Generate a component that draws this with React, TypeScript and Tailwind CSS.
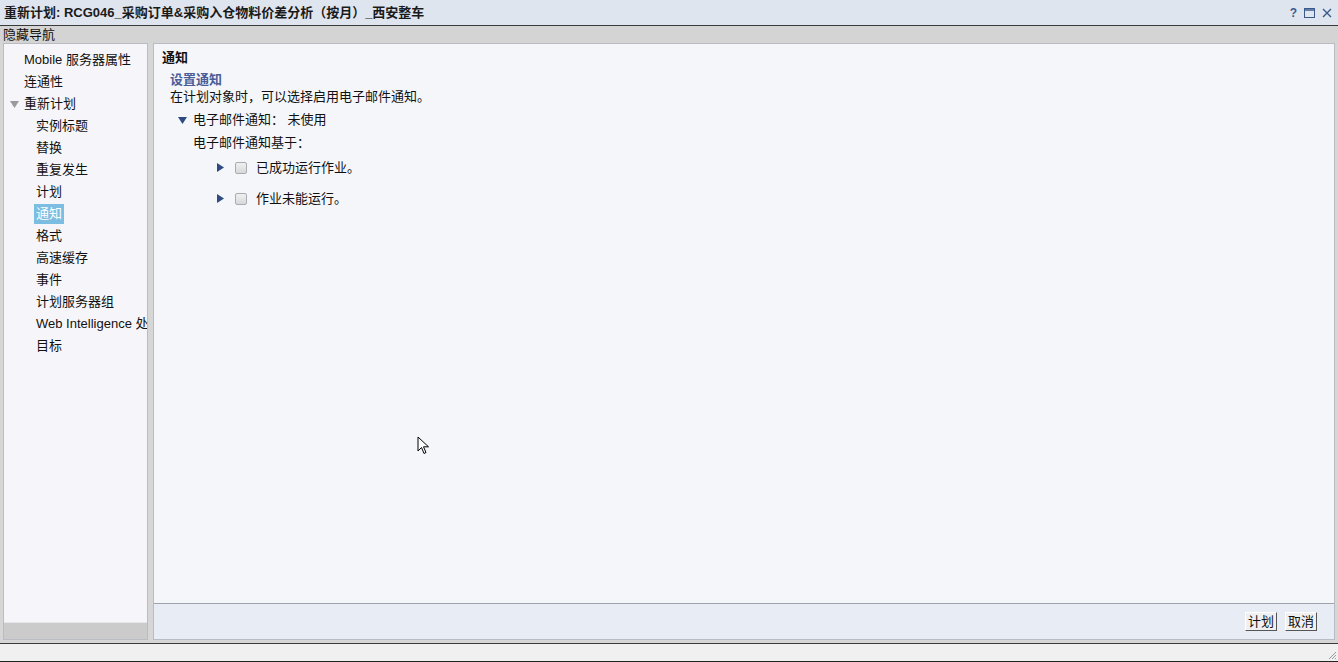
import { useState } from 'react';

const font = '"Liberation Sans", "Noto Sans CJK SC", sans-serif';

const navItems = [
  { label: '实例标题' },
  { label: '替换' },
  { label: '重复发生' },
  { label: '计划' },
  { label: '通知', active: true },
  { label: '格式' },
  { label: '高速缓存' },
  { label: '事件' },
  { label: '计划服务器组' },
  { label: 'Web Intelligence 处理' },
  { label: '目标' },
];

function Tri({ dir, color = '#2f4a80' }: { dir: 'down' | 'right'; color?: string }) {
  return dir === 'down' ? (
    <svg width="9" height="7" viewBox="0 0 9 7" className="shrink-0">
      <path d="M0 0 L9 0 L4.5 7 Z" fill={color} />
    </svg>
  ) : (
    <svg width="7" height="9" viewBox="0 0 7 9" className="shrink-0">
      <path d="M0 0 L7 4.5 L0 9 Z" fill={color} />
    </svg>
  );
}

function CheckRow({ label }: { label: string }) {
  const [on, setOn] = useState(false);
  return (
    <div className="flex items-center h-[31px] pl-[55px]">
      <Tri dir="right" />
      <button
        onClick={() => setOn(!on)}
        className="ml-[11px] w-[12px] h-[12px] border border-[#a9acb3] rounded-[2px] bg-gradient-to-b from-[#f0f0f0] to-[#d8d8d8]"
      />
      <span className="ml-[9px] text-[13px] text-[#111]">{label}</span>
    </div>
  );
}

export default function App() {
  return (
    <div className="w-[1338px] h-[662px] bg-[#d6d6d6] flex flex-col overflow-hidden relative" style={{ fontFamily: font }}>
      {/* Title bar */}
      <div className="h-[26px] bg-[#dfe5ef] border-b border-[#3a3a3a] flex items-center justify-between px-[4px] shrink-0">
        <span className="text-[13px] font-bold text-[#1a1a1a]">重新计划: RCG046_采购订单&amp;采购入仓物料价差分析（按月）_西安整车</span>
        <div className="flex items-center gap-[7px] pr-[2px] text-[#3b5a8c]">
          <span className="text-[12px] font-bold">?</span>
          <svg width="11" height="10" viewBox="0 0 11 10">
            <rect x="0.5" y="0.5" width="10" height="9" fill="none" stroke="#3b5a8c" />
            <line x1="0" y1="2" x2="11" y2="2" stroke="#3b5a8c" strokeWidth="1.5" />
          </svg>
          <svg width="10" height="10" viewBox="0 0 10 10">
            <path d="M1 1 L9 9 M9 1 L1 9" stroke="#3b5a8c" strokeWidth="1.4" />
          </svg>
        </div>
      </div>

      {/* Hide nav */}
      <div className="h-[17px] bg-[#d4d4d4] flex items-center px-[3px] text-[13px] text-[#111] shrink-0">隐藏导航</div>

      {/* Body */}
      <div className="flex flex-1 px-[3px] gap-[5px] pb-[3px]">
        {/* Left nav */}
        <div className="w-[145px] border border-[#b9bcc2] bg-[#f6f6fa] flex flex-col overflow-hidden">
          <div className="flex-1 pt-[5px] text-[13px] text-[#111] whitespace-nowrap">
            <div className="h-[22px] flex items-center pl-[20px]">Mobile 服务器属性</div>
            <div className="h-[22px] flex items-center pl-[20px]">连通性</div>
            <div className="h-[22px] flex items-center pl-[6px] gap-[5px]">
              <Tri dir="down" color="#9a9a9a" />
              <span>重新计划</span>
            </div>
            {navItems.map((it) => (
              <div key={it.label} className="h-[22px] flex items-center pl-[30px]">
                <span className={it.active ? 'bg-[#7cbde2] text-white px-[2px]' : 'px-[2px]'}>{it.label}</span>
              </div>
            ))}
          </div>
          <div className="h-[17px] bg-[#cbcbcb] border-t border-[#e6e6ea]" />
        </div>

        {/* Right content */}
        <div className="flex-1 border border-[#b9bcc2] bg-[#f5f6fa] flex flex-col">
          <div className="flex-1 pl-[8px] pt-[4px]">
            <div className="text-[13px] font-bold text-[#111] h-[17px]">通知</div>
            <div className="pl-[8px] mt-[6px]">
              <div className="text-[13px] font-bold text-[#4a5d98] leading-[17px]">设置通知</div>
              <div className="text-[13px] text-[#111] leading-[17px]">在计划对象时，可以选择启用电子邮件通知。</div>
            </div>
            <div className="mt-[5px]">
              <div className="flex items-center h-[20px] pl-[16px] gap-[6px] text-[13px] text-[#111]">
                <Tri dir="down" />
                <span>电子邮件通知：&nbsp;未使用</span>
              </div>
              <div className="h-[22px] pt-[5px] leading-[16px] pl-[31px] text-[13px] text-[#111]">电子邮件通知基于：</div>
              <CheckRow label="已成功运行作业。" />
              <CheckRow label="作业未能运行。" />
            </div>
          </div>
          <div className="h-[36px] bg-[#e8ecf4] border-t border-[#9ea3ad] flex items-center justify-end gap-[8px] pr-[17px]">
            <button className="h-[19px] px-[2px] bg-[#f0f0f0] border-r border-b border-[#555] border-l border-t border-l-white border-t-white text-[13px] text-[#111] leading-none">计划</button>
            <button className="h-[19px] px-[2px] bg-[#f0f0f0] border-r border-b border-[#555] border-l border-t border-l-white border-t-white text-[13px] text-[#111] leading-none">取消</button>
          </div>
        </div>
      </div>

      {/* Status bar */}
      <div className="h-[19px] bg-[#f0f0f0] border-t border-[#3a3a3a] border-b border-b-[#222] flex justify-end items-end shrink-0">
        <svg width="10" height="10" viewBox="0 0 10 10" className="mb-[1px] mr-[1px]">
          <path d="M9 2 L2 9 M9 5 L5 9 M9 8 L8 9" stroke="#999" />
        </svg>
      </div>

      {/* mouse cursor */}
      <svg width="14" height="20" viewBox="0 0 14 20" className="absolute left-[417px] top-[436px]">
        <path d="M1 1 L1 15 L4.5 11.5 L7 17.5 L9 16.5 L6.5 10.8 L11.5 10.8 Z" fill="white" stroke="black" strokeWidth="1" />
      </svg>
    </div>
  );
}
